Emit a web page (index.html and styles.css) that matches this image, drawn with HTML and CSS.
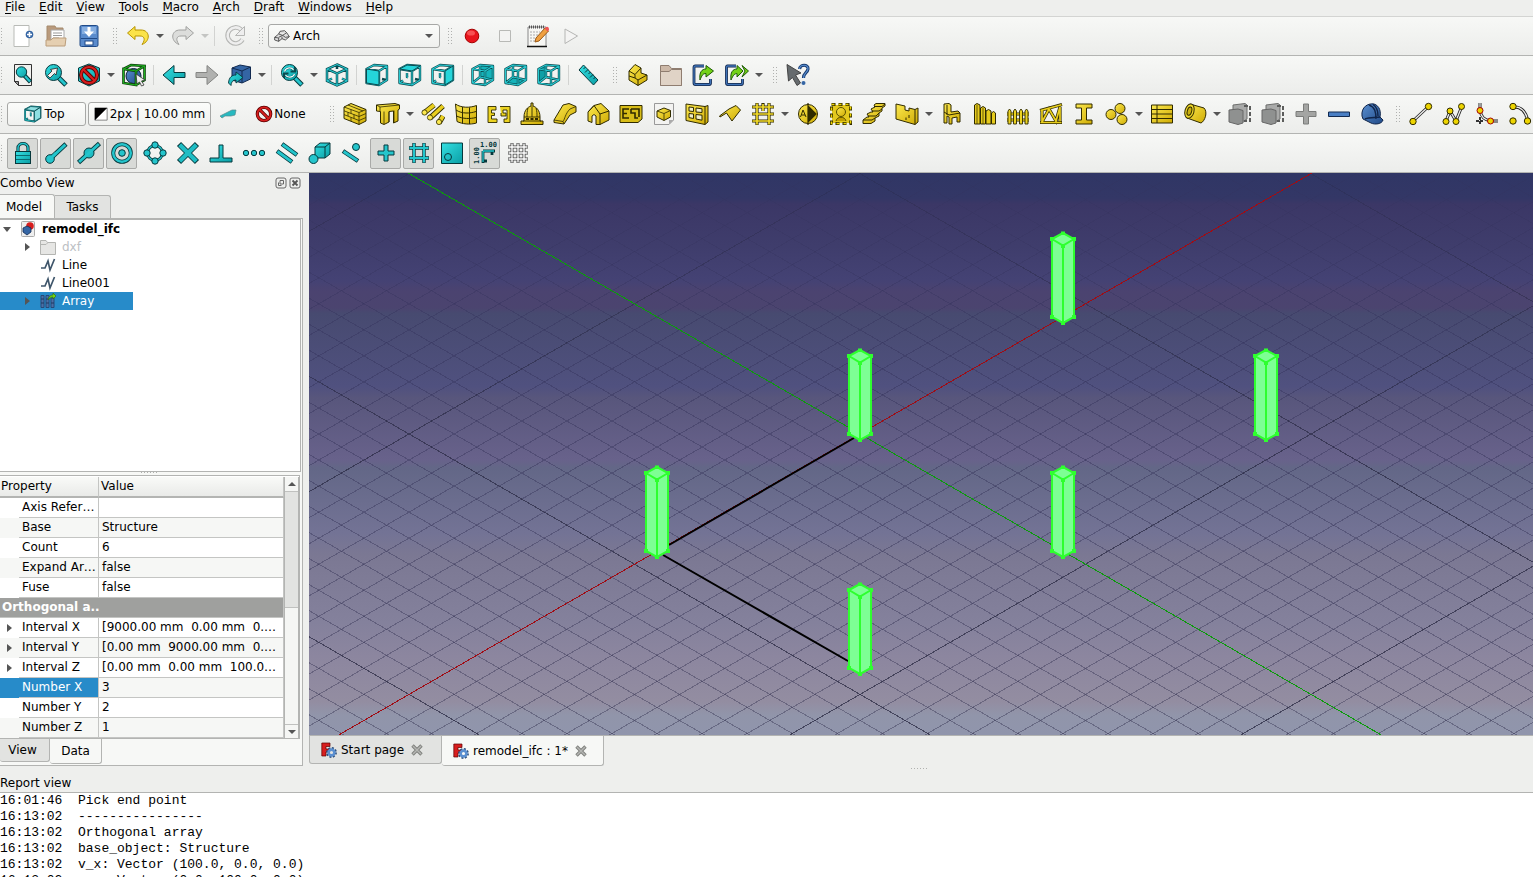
FILE: index.html
```html
<!DOCTYPE html>
<html lang="en">
<head>
<meta charset="utf-8">
<title>remodel_ifc</title>
<link rel="stylesheet" href="styles.css">
</head>
<body>
<svg class="defs" aria-hidden="true">
<defs>
<linearGradient id="gt" x1="0" y1="0" x2="1" y2="1"><stop offset="0" stop-color="#34e0e2"/><stop offset="1" stop-color="#0a9ea5"/></linearGradient>
<linearGradient id="gy" x1="0" y1="0" x2="1" y2="1"><stop offset="0" stop-color="#fce94f"/><stop offset="1" stop-color="#cfab04"/></linearGradient>
<linearGradient id="gb" x1="0" y1="0" x2="1" y2="1"><stop offset="0" stop-color="#5a8fd0"/><stop offset="1" stop-color="#204a87"/></linearGradient>
<g id="frame"><path d="M1.500 6L14 8V22L1.500 20ZM1.500 6L9 2L22 3L14 8M22 3V17L14 22M9 2V14L1.500 20M9 14L22 17" fill="none" stroke="#0a4a4f" stroke-width="2.400" stroke-linejoin="round"/><path d="M1.500 6L14 8V22L1.500 20ZM1.500 6L9 2L22 3L14 8M22 3V17L14 22M9 2V14L1.500 20M9 14L22 17" fill="none" stroke="#27c9d0" stroke-width="1.100" stroke-linejoin="round"/></g>
<g id="shell"><path d="M1.500 6L14 8V22L1.500 20ZM1.500 6L9 2L22 3L14 8M22 3V17L14 22M9 10V14L10 14.500M5 17.500L2 20M17 16L21 17" fill="none" stroke="#0a4a4f" stroke-width="2.400" stroke-linejoin="round"/><path d="M1.500 6L14 8V22L1.500 20ZM1.500 6L9 2L22 3L14 8M22 3V17L14 22M9 10V14L10 14.500M5 17.500L2 20" fill="none" stroke="#27c9d0" stroke-width="1.100" stroke-linejoin="round"/></g>
<g id="lens"><path d="M14 14L22 22" stroke="#06383c" stroke-width="5"/><path d="M14 14L21.500 21.500" stroke="#24c5cc" stroke-width="3"/><circle cx="9.500" cy="9.500" r="8" fill="url(#gt)" stroke="#06383c"/></g>
<g id="no"><circle cx="12" cy="12" r="8" fill="none" stroke="#5a0000" stroke-width="4"/><path d="M6.500 6.500L17.500 17.500" stroke="#5a0000" stroke-width="4"/><circle cx="12" cy="12" r="8" fill="none" stroke="#d81e1e" stroke-width="2.200"/><path d="M6.500 6.500L17.500 17.500" stroke="#d81e1e" stroke-width="2.200"/></g>

<symbol id="new" viewBox="0 0 24 24"><path d="M3 1.500H18V22.500H3Z" fill="#fff" stroke="#b9bbb7"/><circle cx="18.500" cy="10.500" r="3.800" fill="#3465a4"/><path d="M18.500 8V13M16 10.500H21" stroke="#fff" stroke-width="1.600"/></symbol>
<symbol id="open" viewBox="0 0 24 24"><path d="M3 2H11L12 4H19V18H3Z" fill="#b99a7c" stroke="#a58a6c"/><path d="M7 6H20V18H7Z" fill="#fff" stroke="#aaa"/><path d="M9 9H18M9 11.500H18M9 14H15" stroke="#999"/><path d="M2 16H7L9 14H22L21 22H2Z" fill="#e5cfb1" stroke="#bb9d7a"/></symbol>
<symbol id="save" viewBox="0 0 24 24"><rect x="3" y="1.500" width="18" height="21" rx="1.500" fill="#5a8bcc" stroke="#204a87"/><path d="M4 14.500H20" stroke="#204a87"/><rect x="8" y="17" width="8" height="4" fill="#fff" stroke="#204a87"/><path d="M5 3H19V10H5Z" fill="#86aee0"/><path d="M10.500 3H13.500V7.500H17L12 13L7 7.500H10.500Z" fill="#fff"/></symbol>
<symbol id="undo" viewBox="0 0 24 24"><path d="M1.500 9L9 2.500V6H15C24 6 25 17 16 20.500C20 15 18 12 14 12H9V15.500Z" fill="#fbe34a" stroke="#b79400" stroke-linejoin="round"/></symbol>
<symbol id="redo" viewBox="0 0 24 24"><path d="M22.500 9L15 2.500V6H9C0 6 -1 17 8 20.500C4 15 6 12 10 12H15V15.500Z" fill="#dcdddb" stroke="#a0a19f" stroke-linejoin="round"/></symbol>
<symbol id="refresh" viewBox="0 0 24 24"><path d="M18 5.500A8 8 0 1 0 19.500 15.500" fill="none" stroke="#b5b6b4" stroke-width="4.600"/><path d="M18 5.500A8 8 0 1 0 19.500 15.500" fill="none" stroke="#eee" stroke-width="2.600"/><path d="M21.500 2.500V11.500H12.500Z" fill="#eee" stroke="#b5b6b4"/></symbol>
<symbol id="arch" viewBox="0 0 24 24"><path d="M1 14L7 9L13 11L19 7L23 13L17 18L12 16L7 20L1 18ZM7 9L9 5L16 4L19 7M7 14L13 11L17 14L23 13M1 14L7 15V20M12 16V13" fill="#ddd" stroke="#444" stroke-width="1.300"/></symbol>
<symbol id="record" viewBox="0 0 24 24"><circle cx="12" cy="12" r="6.800" fill="#e8141c" stroke="#a40000"/><ellipse cx="11" cy="9" rx="4" ry="2.600" fill="#ff6a6a" opacity=".7"/></symbol>
<symbol id="stop" viewBox="0 0 24 24"><path d="M6.500 6.500H17.500V17.500H6.500Z" fill="#f3f3f2" stroke="#b8b9b6"/></symbol>
<symbol id="edit" viewBox="0 0 24 24"><path d="M2 3H20V22.500H2Z" fill="#f7f7f4" stroke="#888"/><path d="M1 22.500H21" stroke="#111" stroke-width="1.500"/><path d="M3 3H19" stroke="#555" stroke-width="3" stroke-dasharray="1 1"/><path d="M4 8H14M4 11H12M4 14H11M4 17H9" stroke="#aaa" stroke-dasharray="2 1"/><path d="M9 18L10 14L19 4L22.500 7L13 17Z" fill="#f0a040" stroke="#9b5a17"/><path d="M18.500 4.500L20 3Q23 2 23 6L21.500 7.500Z" fill="#e55"/></symbol>
<symbol id="play" viewBox="0 0 24 24"><path d="M6 5L18.500 12L6 19.500Z" fill="#f4f4f3" stroke="#b5b6b4"/></symbol>
<symbol id="fitall" viewBox="0 0 24 24"><path d="M3.500 1.500H20.500V22.500H7.500L3.500 18.500Z" fill="#f1f1ef" stroke="#333"/><path d="M3.500 18.500H7.500V22.500Z" fill="#999" stroke="#333"/><path d="M13 12L19.500 19" stroke="#06383c" stroke-width="4.400"/><path d="M13 12L19 18.500" stroke="#24c5cc" stroke-width="2.400"/><circle cx="10.500" cy="9" r="5.200" fill="url(#gt)" stroke="#06383c"/></symbol>
<symbol id="fitsel" viewBox="0 0 24 24"><use href="#lens"/><path d="M3.500 12.500L8 8L6.500 6.500L13.500 5L12 12L10.500 10.500L6 15Z" fill="#f2f2f0" stroke="#222" stroke-width=".8"/></symbol>
<symbol id="nodraw" viewBox="0 0 24 24"><path d="M12 1L22.500 5V18L12 23L1.500 18V5Z" fill="url(#gt)" stroke="#06383c"/><use href="#no"/></symbol>
<symbol id="bbox" viewBox="0 0 24 24"><circle cx="11.500" cy="13" r="7.500" fill="url(#gb)" stroke="#0b1e3a"/><path d="M1.500 6L14 8V22L1.500 20ZM1.500 6L9 2L22.500 3L14 8M22.500 3V17L14 22" fill="none" stroke="#0b3a0b" stroke-width="2.600"/><path d="M1.500 6L14 8V22L1.500 20ZM1.500 6L9 2L22.500 3L14 8M22.500 3V17L14 22" fill="none" stroke="#1fae1f" stroke-width="1.200"/><path d="M14 11L23 17L19.500 18L22 22L19.500 23L17.500 19L15 21Z" fill="#eee" stroke="#333" stroke-width=".8"/></symbol>
<symbol id="back" viewBox="0 0 24 24"><path d="M1 12L12 2.500V9.500H23V14.500H12V21.500Z" fill="url(#gt)" stroke="#06383c" stroke-linejoin="round"/></symbol>
<symbol id="fwd" viewBox="0 0 24 24"><path d="M23 12L12 2.500V9.500H1V14.500H12V21.500Z" fill="#b0b1af" stroke="#858684" stroke-linejoin="round"/></symbol>
<symbol id="link" viewBox="0 0 24 24"><path d="M4 5L12 2L22.500 4V16L14 20L4 17Z" fill="#3465a4" stroke="#122a50"/><path d="M4 5L14 8L22.500 4M14 8V20" fill="none" stroke="#122a50"/><path d="M0.500 20C1 14 4 12 8 12V9L15 14.500L8 20V17C5 17 3 19 3 22.500Z" fill="url(#gt)" stroke="#06383c" stroke-width=".9"/></symbol>
<symbol id="sync" viewBox="0 0 24 24"><use href="#lens"/><path d="M4.500 8.500C6 4 12 4 13.500 7M15 4V8.500H10.500M14.500 11C13 15 7 15 5.500 12M4 15V10.500H8.500" fill="none" stroke="#0a4a4f" stroke-width="2"/><path d="M4.500 8.500C6 4 12 4 13.500 7M14.500 11C13 15 7 15 5.500 12" fill="none" stroke="#e8ffff" stroke-width="1.200"/></symbol>
<symbol id="iso" viewBox="0 0 24 24"><path d="M12 1.500L22 6V18L12 22.500L2 18V6ZM2 6L12 10.500L22 6M12 10.500V22.500M12 2V6M2 18L7 15.500M22 18L17 15.500" fill="none" stroke="#0a4a4f" stroke-width="2.500"/><path d="M12 1.500L22 6V18L12 22.500L2 18V6ZM2 6L12 10.500L22 6M12 10.500V22.500M2 18L7 15.500M22 18L17 15.500" fill="none" stroke="#27c9d0" stroke-width="1.100"/></symbol>
<symbol id="vfront" viewBox="0 0 24 24"><use href="#shell"/><path d="M1.500 6L14 8V22L1.500 20Z" fill="#25d5da" stroke="#0a4a4f"/></symbol>
<symbol id="vtop" viewBox="0 0 24 24"><use href="#shell"/><path d="M1.500 6L9 2L22 3L14 8Z" fill="#25d5da" stroke="#0a4a4f"/></symbol>
<symbol id="vright" viewBox="0 0 24 24"><use href="#shell"/><path d="M14 8L22 3V17L14 22Z" fill="#25d5da" stroke="#0a4a4f"/></symbol>
<symbol id="vrear" viewBox="0 0 24 24"><path d="M9 2L22 3V17L9 14Z" fill="#16b3ba"/><use href="#frame"/></symbol>
<symbol id="vbottom" viewBox="0 0 24 24"><path d="M9 14L22 17L14 22L1.500 20Z" fill="#16b3ba"/><use href="#frame"/></symbol>
<symbol id="vleft" viewBox="0 0 24 24"><path d="M1.500 6L9 2V14L1.500 20Z" fill="#0f9fa6"/><use href="#frame"/></symbol>
<symbol id="ruler" viewBox="0 0 24 24"><path d="M6.500 2L21 17L16.500 22L2 7Z" fill="url(#gt)" stroke="#06383c"/><path d="M8.500 4L6.500 6M11 6.500L8 9.500M13.500 9L11.500 11M16 11.500L13 14.500M18.500 14L16.500 16" stroke="#06383c"/></symbol>
<symbol id="part" viewBox="0 0 24 24"><path d="M3 8L9 1.500L15 5V10L21 12V17L12 22.500L3 17Z" fill="url(#gy)" stroke="#302b00"/><path d="M3 8L9 11.500L15 5M9 11.500V15L12 17L21 12M3 13L9 15M12 17V22.500" fill="none" stroke="#302b00"/></symbol>
<symbol id="folder" viewBox="0 0 24 24"><path d="M1.500 2.500H10L12.500 5.500H22.500V22.500H1.500Z" fill="#cdb9a8" stroke="#8f7d70"/><path d="M1.500 8.500H10L12.500 6.500H22.500V22.500H1.500Z" fill="#e0d3c6" stroke="#8f7d70"/></symbol>
<symbol id="share" viewBox="0 0 24 24"><path d="M12 3H3.500Q2 3 2 4.500V20Q2 21.500 3.500 21.500H17Q18.500 21.500 18.500 20V16" fill="none" stroke="#10254a" stroke-width="2.800"/><path d="M12 3H3.500Q2 3 2 4.500V20Q2 21.500 3.500 21.500H17Q18.500 21.500 18.500 20V16" fill="none" stroke="#3f73b8" stroke-width="1.300"/><path d="M8 17C7 9 10 6 14 6V2.500L21.500 8L14 14V10.500C11 10.500 10 12 8 17Z" fill="#73d216" stroke="#1c5a04"/></symbol>
<symbol id="share2" viewBox="0 0 24 24"><path d="M11 3H2.500Q1.500 3 1.500 4.500V20Q1.500 21.500 3 21.500H16Q17.500 21.500 17.500 20V16" fill="none" stroke="#10254a" stroke-width="2.800"/><path d="M11 3H2.500Q1.500 3 1.500 4.500V20Q1.500 21.500 3 21.500H16Q17.500 21.500 17.500 20V16" fill="none" stroke="#3f73b8" stroke-width="1.300"/><path d="M6 17C5 9 8 6 12 6V2.500L18 8L12 14V10.500C10 10.500 8 12 6 17ZM17 2.500L23.500 8L17 14L20 8Z" fill="#73d216" stroke="#1c5a04"/></symbol>
<symbol id="whats" viewBox="0 0 24 24"><path d="M1 1.500L15 10L9.500 12L14.500 20L11 22.500L6.500 14.500L2.500 18Z" fill="#666b6e" stroke="#444"/><path d="M13.500 6C14 1 22.500 1 22 6C21.500 10 17.500 9.500 17.500 15" fill="none" stroke="#173a70" stroke-width="3.200"/><path d="M13.500 6C14 1 22.500 1 22 6C21.500 10 17.500 9.500 17.500 15" fill="none" stroke="#5a8fd0" stroke-width="1.200"/><circle cx="17.500" cy="20" r="2" fill="#3465a4"/></symbol>
<symbol id="topcube" viewBox="0 0 24 24"><use href="#shell"/><path d="M1.500 6L9 2L22 3L14 8ZM14 8L22 3V17L14 22Z" fill="#8fe0e2" stroke="#0a4a4f"/></symbol>
<symbol id="swatch" viewBox="0 0 16 16"><path d="M1 1H15V15H1Z" fill="#fff" stroke="#777"/><path d="M1 1H15L1 15Z" fill="#000"/></symbol>
<symbol id="stamp" viewBox="0 0 24 24"><path d="M4 14L12 10L16 8L20 8L19 13L15 14L9 14L6 16Z" fill="#27b9c0" stroke="#58898c" stroke-width=".7"/></symbol>
<symbol id="none" viewBox="0 0 24 24"><use href="#no"/></symbol>

<symbol id="wall" viewBox="0 0 24 24"><path d="M1 5L8 1.500L23 7.500V19L16 22.500L1 16.500Z" fill="url(#gy)" stroke="#302b00"/><path d="M1 5L16 10.500L23 7.500M16 10.500V22.500M1 8.800L16 14.500L23 11.500M1 12.600L16 18.500L23 15.500M8 7.500V11.500M5 10.300V14M11 12.500V16.500M8 15.400V19M5 3L20 9" fill="none" stroke="#302b00" stroke-width=".8"/></symbol>
<symbol id="struct" viewBox="0 0 24 24"><path d="M0.500 3L19 1.500L23.500 3V7L22 8V19L17.500 21V9L13 9.500V20L8 22.500L4.500 21V9.500L0.500 9Z" fill="url(#gy)" stroke="#302b00"/><path d="M0.500 3L4 5L23.500 3M4 5V9.500M8 9.500V22M18 8.500V20M13 10V20" stroke="#302b00" fill="none" stroke-width=".8"/></symbol>
<symbol id="rebar" viewBox="0 0 24 24"><path d="M3 11L13 3M9 16L22 4M18 21L22 14" stroke="#302b00" stroke-width="5.400"/><path d="M3 11L13 3M9 16L22 4M18 21L22 14" stroke="#e9cf1e" stroke-width="3.600"/><g fill="#fce94f" stroke="#302b00" stroke-width=".8"><circle cx="3.500" cy="10.500" r="2.600"/><circle cx="9" cy="15.500" r="2.600"/><circle cx="18" cy="20" r="2.600"/></g></symbol>
<symbol id="curtain" viewBox="0 0 24 24"><path d="M1.500 2C7 6 16 6 22.500 3.500V21C16 23 8 22 3 19.500Z" fill="url(#gy)" stroke="#302b00"/><path d="M2 8C8 12 16 11.500 22 9.500M2.500 14C9 17 16 17 22 15.500M8.500 5V21.500M15.500 5.500V22" fill="none" stroke="#302b00"/></symbol>
<symbol id="plan" viewBox="0 0 24 24"><path d="M1 4.500H9V8H4.500V11H7.500V13.500H4.500V17H10V20.500H1ZM13 4.500H23V20.500H17V17H20V8H16V11H19V14H14V11" fill="#ecd321" stroke="#302b00" stroke-width=".9"/></symbol>
<symbol id="dome" viewBox="0 0 24 24"><path d="M4 15C4 8 8 5 11 4V1H13V4C16 5 20 8 20 15V19H23V22.500H1V19H4Z" fill="url(#gy)" stroke="#302b00"/><path d="M4 15H20M3 19H21M12 4V15M8 6C7 9 7 12 7 15M16 6C17 9 17 12 17 15" fill="none" stroke="#302b00" stroke-width=".9"/><path d="M6 17H9M10.500 17H13.500M15 17H18" stroke="#302b00" stroke-width="1.800"/></symbol>
<symbol id="ramp" viewBox="0 0 24 24"><path d="M1 18L10 3L16 1.500L23 4.500V10L17 13L11 22L1 20.500Z" fill="url(#gy)" stroke="#302b00"/><path d="M1 18L10 19.500C12 17 12 12 17 7L23 4.500M10 19.500L11 22" fill="none" stroke="#302b00" stroke-width=".8"/></symbol>
<symbol id="house" viewBox="0 0 24 24"><path d="M2 10L8 3.500L15 1.500L23 9V18L14 22.500H10V14Q8 11 6 14V20.500L2 19Z" fill="url(#gy)" stroke="#302b00"/><path d="M2 10L8 3.500L14 12V22.500M14 12L23 9" fill="none" stroke="#302b00"/></symbol>
<symbol id="floor" viewBox="0 0 24 24"><path d="M1 3.500H23V17L19 20.500H1Z" fill="#d8bd18" stroke="#302b00"/><path d="M10 7H4V16H10M4 11.500H8M12 7H20V15M12 7V11H16V16H19" fill="none" stroke="#302b00" stroke-width="1.600"/></symbol>
<symbol id="page" viewBox="0 0 24 24"><path d="M2.500 1.500H21.500V18L17 22.500H2.500Z" fill="#f3f3f1" stroke="#999"/><path d="M17 22.500V18H21.500Z" fill="#aaa"/><path d="M5 9L12 6L18.500 8.500V15L12 18.500L5 15Z" fill="url(#gy)" stroke="#302b00"/><path d="M5 9L12 11.500L18.500 8.500M12 11.500V18" fill="none" stroke="#302b00" stroke-width=".8"/></symbol>
<symbol id="window" viewBox="0 0 24 24"><path d="M1 2L20 4.500L23 3.500V20L20 22.500L1 18.500Z" fill="url(#gy)" stroke="#302b00"/><path d="M4 5L8.500 5.500V9.500L4 9ZM11 6L17 6.800V10.500L11 10ZM4 11.500L8.500 12V16.500L4 15.600ZM11 12.500L17 13.200V18.200L11 17ZM20 4.500V22.500" fill="#f0eec8" stroke="#302b00"/></symbol>
<symbol id="roof" viewBox="0 0 24 24"><path d="M1.500 14L11 7L18 3.500L22.500 8L14 19L8.500 11L2 15Z" fill="url(#gy)" stroke="#302b00"/></symbol>
<symbol id="axis" viewBox="0 0 24 24"><path d="M6 1V23M18 1V23M12 1V9M1 5H23M1 12H23M1 19H23" stroke="#302b00" stroke-width="3.200"/><path d="M6 1.500V22.500M18 1.500V22.500M12 2V9M1.500 5H22.500M1.500 12H22.500M1.500 19H22.500" stroke="#f3dc2c" stroke-width="1.700"/></symbol>
<symbol id="section" viewBox="0 0 24 24"><circle cx="12" cy="12" r="9.500" fill="url(#gy)" stroke="#302b00"/><path d="M12 1V23M12 4L20 12L12 20Z" fill="#302b00" stroke="#302b00" stroke-width="1.200"/><path d="M4.500 15L7 8L10 15M5.500 13H9" fill="none" stroke="#302b00"/></symbol>
<symbol id="space" viewBox="0 0 24 24"><rect x="3" y="3" width="18" height="18" fill="#e3c91e"/><rect x="2.500" y="2.500" width="19" height="19" fill="none" stroke="#302b00" stroke-width="3" stroke-dasharray="4 3"/><rect x="2.500" y="2.500" width="19" height="19" fill="none" stroke="#edd400" stroke-width="1.500" stroke-dasharray="3 4"/><circle cx="12" cy="10" r="4.500" fill="url(#gy)" stroke="#5a5000"/><path d="M7 19C8 14 16 14 17 19" fill="#c4a000" stroke="#5a5000"/></symbol>
<symbol id="stairs" viewBox="0 0 24 24"><path d="M1 18L5 15H7L5 12L9 10H11L9 7L13 5L12 3L14 1.500H23V4L20 6V9L17 11V14L13 16V19L9 21.500H1Z" fill="url(#gy)" stroke="#302b00"/><path d="M1 18H10L13 16M6 14H14L17 11M10 9H17L20 7M12 4.500H20L23 2" stroke="#302b00" fill="none"/></symbol>
<symbol id="panel" viewBox="0 0 24 24"><path d="M1 2L10 4V8L14 9V6L20 7.500L23 6V20L20 22.500L1 17Z" fill="url(#gy)" stroke="#302b00"/><path d="M20 7.500V22.500M11 15.500V18M14 16V13" stroke="#302b00"/></symbol>
<symbol id="chair" viewBox="0 0 24 24"><path d="M4 2L9 1.500L11 3V10L18 9L20 11V20H17V15L12 16V22H9V15L7 14V21H4Z" fill="url(#gy)" stroke="#302b00"/><path d="M7 3V13M4 10L9 13L20 11" fill="none" stroke="#302b00"/></symbol>
<symbol id="piles" viewBox="0 0 24 24"><path d="M1.500 3L4 1.500L7 3V22H1.500ZM7.500 6L10 4.500L12.500 6V22H7.500ZM13 9L15.500 7.500L18 9V22H13ZM18.500 11L20.500 9.500L22.500 11V22H18.500Z" fill="#e6cb1d" stroke="#302b00"/><path d="M4 3V22M10 6V22" stroke="#302b00" stroke-width=".7"/></symbol>
<symbol id="fence" viewBox="0 0 24 24"><path d="M1 12H23M1 18H23" stroke="#302b00" stroke-width="3"/><path d="M1 12H23M1 18H23" stroke="#ecd321" stroke-width="1.400"/><path d="M2 9L3.500 7L5 9V22H2ZM7.500 9L9 7L10.500 9V22H7.500ZM13.500 9L15 7L16.500 9V22H13.500ZM19 9L20.500 7L22 9V22H19Z" fill="#ecd321" stroke="#302b00" stroke-width=".9"/></symbol>
<symbol id="truss" viewBox="0 0 24 24"><path d="M1 8.500L23 2.500M1 20.500H23M3 8V20L10 7L17 19L21 5V19" fill="none" stroke="#302b00" stroke-width="3.200"/><path d="M1.500 8.500L22.500 2.800M1.500 20.500H22.500M3 8V20L10 7L17 19L21 5V19" fill="none" stroke="#e9cf1e" stroke-width="1.700"/></symbol>
<symbol id="ibeam" viewBox="0 0 24 24"><path d="M4 2H20V6H14.500V18H20V22H4V18H9.500V6H4Z" fill="url(#gy)" stroke="#302b00"/></symbol>
<symbol id="balls" viewBox="0 0 24 24"><g fill="url(#gy)" stroke="#302b00"><circle cx="15" cy="6.500" r="5"/><circle cx="6" cy="12.500" r="5"/><circle cx="17" cy="17.500" r="5"/></g></symbol>
<symbol id="sched" viewBox="0 0 24 24"><path d="M1.500 3H22.500V21H1.500Z" fill="url(#gy)" stroke="#302b00"/><path d="M1.500 7.500H22.500M1.500 12H22.500M1.500 16.500H22.500M7 3V21" stroke="#302b00"/></symbol>
<symbol id="pipe" viewBox="0 0 24 24"><path d="M7 2L21 6C25 10 22 19 18 21L4 16Z" fill="url(#gy)" stroke="#302b00"/><ellipse cx="6.500" cy="9" rx="4.500" ry="7.300" fill="#f1da2a" stroke="#302b00" transform="rotate(15 6 9)"/><ellipse cx="6.500" cy="9" rx="2.200" ry="4.300" fill="#cbb00f" stroke="#302b00" transform="rotate(15 6 9)"/></symbol>
<symbol id="gbox" viewBox="0 0 24 24"><path d="M5 3L17 1.500L19 3V17L14 20H5Z" fill="#a9aaa9" stroke="#6d6e6d"/><path d="M1 8L10 7L15 8.500V21L10 22.500L1 20Z" fill="#8f9190" stroke="#666"/><path d="M16 4H22V19H16" fill="none" stroke="#5c5d5c" stroke-width="2" stroke-dasharray="4 2"/></symbol>
<symbol id="plus" viewBox="0 0 24 24"><path d="M9.500 2H14.500V9.500H22V14.500H14.500V22H9.500V14.500H2V9.500H9.500Z" fill="#a4a5a3" stroke="#7b7c7a"/></symbol>
<symbol id="minus" viewBox="0 0 24 24"><path d="M1.500 10H22.500V14.500H1.500Z" fill="#4a7fc4" stroke="#122a50"/></symbol>
<symbol id="hat" viewBox="0 0 24 24"><path d="M2 14C1 5 8 1 14 2C20 4 21 10 20 15L23 18C22 22 15 23 11 21L3 17Z" fill="url(#gb)" stroke="#10254a"/><path d="M9 3C15 5 16 10 16 17M5 17C10 15 16 16 20 15M13 2.500C17 5 18 9 18 14" fill="none" stroke="#10254a" stroke-width="1.400"/></symbol>
<symbol id="dline" viewBox="0 0 24 24"><path d="M4 19L20 4" stroke="#222" stroke-width="3"/><path d="M4 19L20 4" stroke="#eee" stroke-width="1.400"/><g fill="#edd400" stroke="#302b00"><circle cx="4" cy="19.500" r="3.200"/><circle cx="19.500" cy="4.500" r="3.200"/></g></symbol>
<symbol id="dwire" viewBox="0 0 24 24"><path d="M4 19L8 9L14 19L20 4" fill="none" stroke="#222" stroke-width="3"/><path d="M4 19L8 9L14 19L20 4" fill="none" stroke="#eee" stroke-width="1.300"/><g fill="#edd400" stroke="#302b00"><circle cx="4" cy="19.500" r="3"/><circle cx="8" cy="9" r="3"/><circle cx="14" cy="19.500" r="3"/><circle cx="19.500" cy="4.500" r="3"/></g></symbol>
<symbol id="dfillet" viewBox="0 0 24 24"><path d="M5 1V8C6 15 9 18 16 19H23" fill="none" stroke="#222" stroke-width="3"/><path d="M5 1V8C6 15 9 18 16 19H23" fill="none" stroke="#eee" stroke-width="1.200"/><path d="M5 15V23M1 19H9" stroke="#333" stroke-width="2" stroke-dasharray="3 1"/><g fill="#edd400" stroke="#a40000"><circle cx="5" cy="8.500" r="3"/><circle cx="15.500" cy="19" r="3"/></g></symbol>
<symbol id="darc" viewBox="0 0 24 24"><path d="M5 5C13 4 18 10 19.500 18" fill="none" stroke="#222" stroke-width="3"/><path d="M5 5C13 4 18 10 19.500 18" fill="none" stroke="#eee" stroke-width="1.300"/><g fill="#edd400" stroke="#302b00"><circle cx="5" cy="4.500" r="3.200"/><circle cx="5" cy="19" r="3.200"/><circle cx="19.500" cy="19" r="3.200"/></g></symbol>

<symbol id="slock" viewBox="0 0 24 24"><path d="M7 11V7C7 1 17 1 17 7V11" fill="none" stroke="#06383c" stroke-width="3.200"/><path d="M7 11V7C7 1 17 1 17 7V11" fill="none" stroke="#24c5cc" stroke-width="1.500"/><rect x="4.500" y="10.500" width="15" height="12" fill="url(#gt)" stroke="#06383c"/><path d="M5 14.500H19M5 18.500H19" stroke="#0a6a70"/></symbol>
<symbol id="send" viewBox="0 0 24 24"><path d="M7 17L22 3" stroke="#06383c" stroke-width="4.600"/><path d="M7 17L21.400 3.600" stroke="#24c5cc" stroke-width="2.900"/><circle cx="6" cy="18" r="4.300" fill="#24c5cc" stroke="#06383c"/><path d="M7 17L12 12" stroke="#24c5cc" stroke-width="2.900"/></symbol>
<symbol id="smid" viewBox="0 0 24 24"><path d="M1.500 21.500L22.500 2.500" stroke="#06383c" stroke-width="4.600"/><circle cx="12" cy="12" r="5" fill="#20bcc3" stroke="#06383c"/><path d="M2.100 21L21.900 3" stroke="#24c5cc" stroke-width="2.900"/></symbol>
<symbol id="scen" viewBox="0 0 24 24"><circle cx="12" cy="12" r="8.800" fill="none" stroke="#06383c" stroke-width="4"/><circle cx="12" cy="12" r="8.800" fill="none" stroke="#24c5cc" stroke-width="2.500"/><circle cx="12" cy="12" r="3.300" fill="#24c5cc" stroke="#06383c"/></symbol>
<symbol id="sang" viewBox="0 0 24 24"><circle cx="12" cy="12" r="7.500" fill="none" stroke="#06383c" stroke-width="3"/><circle cx="12" cy="12" r="7.500" fill="none" stroke="#24c5cc" stroke-width="1.300"/><g fill="#24c5cc" stroke="#06383c"><circle cx="12" cy="4" r="3.200"/><circle cx="12" cy="20" r="3.200"/><circle cx="4" cy="12" r="3.200"/><circle cx="20" cy="12" r="3.200"/></g></symbol>
<symbol id="sint" viewBox="0 0 24 24"><path d="M3 3L21 21M21 3L3 21" stroke="#06383c" stroke-width="5.800"/><path d="M3.700 3.700L20.300 20.300M20.300 3.700L3.700 20.300" stroke="#1fbdc4" stroke-width="4.200"/></symbol>
<symbol id="sperp" viewBox="0 0 24 24"><path d="M10 4H14V17H23V21H1V17H10Z" fill="url(#gt)" stroke="#06383c"/></symbol>
<symbol id="sext" viewBox="0 0 24 24"><g fill="#24c5cc" stroke="#06383c"><circle cx="4" cy="12" r="2.700"/><circle cx="12" cy="12" r="2.700"/><circle cx="20" cy="12" r="2.700"/></g></symbol>
<symbol id="spar" viewBox="0 0 24 24"><path d="M7 3L22 14M2 10L17 21" stroke="#06383c" stroke-width="4.400"/><path d="M7.500 3.500L21.500 13.600M2.500 10.500L16.500 20.600" stroke="#24c5cc" stroke-width="2.800"/></symbol>
<symbol id="sspec" viewBox="0 0 24 24"><path d="M7 6L12 2H22V13L17 17H7Z" fill="url(#gt)" stroke="#06383c"/><path d="M7 6H17L22 2M17 6V17" fill="none" stroke="#06383c"/><circle cx="5.500" cy="18" r="4.500" fill="#24c5cc" stroke="#06383c"/></symbol>
<symbol id="snear" viewBox="0 0 24 24"><path d="M2 10L17 20" stroke="#06383c" stroke-width="4.400"/><path d="M2.600 10.500L16.400 19.600" stroke="#24c5cc" stroke-width="2.800"/><circle cx="15" cy="6" r="3.500" fill="#24c5cc" stroke="#06383c"/></symbol>
<symbol id="sortho" viewBox="0 0 24 24"><path d="M10 4H14V10H20V14H14V20H10V14H4V10H10Z" fill="#24c5cc" stroke="#06383c"/></symbol>
<symbol id="sgrid" viewBox="0 0 24 24"><path d="M7 2V22M17 2V22M2 7H22M2 17H22" stroke="#06383c" stroke-width="3.400"/><path d="M7 2.500V21.500M17 2.500V21.500M2.500 7H21.500M2.500 17H21.500" stroke="#24c5cc" stroke-width="2"/></symbol>
<symbol id="swp" viewBox="0 0 24 24"><path d="M1.500 2H22.500V22.500H1.500Z" fill="url(#gt)" stroke="#06383c"/><circle cx="8" cy="16" r="3.500" fill="none" stroke="#06383c"/></symbol>
<symbol id="sdim" viewBox="0 0 24 24"><path d="M10 10H22M10 10V22M19 10V14M10 20H14" fill="none" stroke="#06383c" stroke-width="2.800"/><path d="M10 10H21M10 10V21" fill="none" stroke="#24c5cc" stroke-width="1.300"/><text x="7" y="6" class="dimtext">1.00</text><text x="-23" y="6" transform="rotate(-90)" class="dimtext">1.00</text></symbol>
<symbol id="sgrid2" viewBox="0 0 24 24"><path d="M6 2V22M12 2V22M18 2V22M2 6H22M2 12H22M2 18H22" stroke="#444" stroke-width="3"/><path d="M6 2.500V21.500M12 2.500V21.500M18 2.500V21.500M2.500 6H21.500M2.500 12H21.500M2.500 18H21.500" stroke="#fff" stroke-width="1.400"/></symbol>

<symbol id="doc" viewBox="0 0 16 16"><rect x="1.500" y=".5" width="13" height="15" rx="1" fill="#eee" stroke="#aaa"/><circle cx="10" cy="5" r="3.800" fill="#d81e1e"/><path d="M3 7L7 5L11 7V11L7 14L3 11Z" fill="#3465a4" stroke="#122a50" stroke-width=".8"/></symbol>
<symbol id="group" viewBox="0 0 16 16"><path d="M.5 1.500H6L7.500 3.500H15.500V15.500H.5Z" fill="#e6e6e4" stroke="#b4b5b2"/><path d="M.5 5.500H6L8 3.500" fill="none" stroke="#b4b5b2"/></symbol>
<symbol id="poly" viewBox="0 0 16 16"><path d="M1 11H5L8 4L10 13L14.500 2" fill="none" stroke="#3f566b" stroke-width="1.700"/></symbol>
<symbol id="array" viewBox="0 0 16 16"><path d="M1 2.500H4V14.500H1ZM6 2.500H9V14.500H6ZM11 5H14V14.500H11Z" fill="#4c6fa5" stroke="#274a78"/><path d="M1 6H4M1 10H4M6 6H9M6 10H9M11 10H14" stroke="#203a62"/><path d="M8 7C9 3 11 2 13 2V0L16 3L13 6V4C11 4 10 5 8 7Z" fill="#73d216" stroke="#2f6b06" stroke-width=".6"/></symbol>
<symbol id="fc" viewBox="0 0 16 16"><path d="M.8 1H9V4.500H5V7H8V10H5V14H.8Z" fill="#d81e1e" stroke="#5a0000" stroke-width=".7"/><circle cx="10.500" cy="10.500" r="4.500" fill="none" stroke="#274a78" stroke-width="1.800" stroke-dasharray="2 1.500"/><circle cx="10.500" cy="10.500" r="2.900" fill="none" stroke="#5a8fd0" stroke-width="2.600"/></symbol>
<symbol id="x" viewBox="0 0 12 12"><path d="M1.500 1.500L10.500 10.500M10.500 1.500L1.500 10.500" stroke="#7f817d" stroke-width="3.400"/><path d="M2 2L10 10M10 2L2 10" stroke="#b5b6b3" stroke-width="1.500"/></symbol>
<symbol id="float" viewBox="0 0 12 12"><rect x="1" y="1" width="10" height="10" rx="2" fill="none" stroke="#666"/><path d="M5 3.500H8.500V7H5ZM3.500 5.500V8.500H6.500" fill="none" stroke="#666"/></symbol>
<symbol id="close" viewBox="0 0 12 12"><rect x="1" y="1" width="10" height="10" rx="2" fill="none" stroke="#666"/><path d="M3.500 3.500L8.500 8.500M8.500 3.500L3.500 8.500" stroke="#555" stroke-width="1.800"/></symbol>
<symbol id="column" viewBox="-16 -90 32 102" overflow="visible"><path d="M-11 -78L0 -84L11 -78V0L0 6L-11 0Z" fill="#7dff94"/><path d="M-11 -78L0 -84L11 -78V0L0 6L-11 0ZM-11 -78L0 -71.500L11 -78M0 -71.500V6" fill="none" stroke="#2eff2e" stroke-width="2"/><path d="M-2 -85.500H2V-82H-2ZM-13 -80H-9V-76H-13ZM9 -80H13V-76H9ZM-2 -73H2V-69H-2ZM-13 -2H-9V2H-13ZM9 -2H13V2H9ZM-2 4H2V8H-2Z" fill="#2eff2e"/></symbol>
</defs>
</svg>

<nav class="menubar" aria-label="Main menu">
<button><u>F</u>ile</button><button><u>E</u>dit</button><button><u>V</u>iew</button><button><u>T</u>ools</button><button><u>M</u>acro</button><button><u>A</u>rch</button><button><u>D</u>raft</button><button><u>W</u>indows</button><button><u>H</u>elp</button>
</nav>

<div class="toolbar" role="toolbar" aria-label="File and macro">
<i class="grip first"></i>
<button class="tool" aria-label="New"><svg><use href="#new"/></svg></button>
<button class="tool" aria-label="Open"><svg><use href="#open"/></svg></button>
<button class="tool" aria-label="Save"><svg><use href="#save"/></svg></button>
<i class="grip"></i>
<button class="tool" aria-label="Undo"><svg><use href="#undo"/></svg></button><button class="drop" aria-label="Undo list"></button>
<button class="tool" aria-label="Redo"><svg><use href="#redo"/></svg></button><button class="drop off" aria-label="Redo list"></button>
<i class="sep"></i>
<button class="tool" aria-label="Refresh"><svg><use href="#refresh"/></svg></button>
<i class="grip"></i>
<div class="workbench"><svg><use href="#arch"/></svg><select aria-label="Workbench"><option>Arch</option></select></div>
<i class="grip"></i>
<button class="tool" aria-label="Record macro"><svg><use href="#record"/></svg></button>
<button class="tool" aria-label="Stop macro"><svg><use href="#stop"/></svg></button>
<button class="tool" aria-label="Macros"><svg><use href="#edit"/></svg></button>
<button class="tool" aria-label="Execute macro"><svg><use href="#play"/></svg></button>
</div>

<div class="toolbar" role="toolbar" aria-label="View">
<i class="grip first"></i>
<button class="tool" aria-label="Fit all"><svg><use href="#fitall"/></svg></button>
<button class="tool" aria-label="Fit selection"><svg><use href="#fitsel"/></svg></button>
<button class="tool" aria-label="Draw style"><svg><use href="#nodraw"/></svg></button><button class="drop" aria-label="Draw styles"></button>
<button class="tool" aria-label="Bounding box"><svg><use href="#bbox"/></svg></button>
<i class="sep"></i>
<button class="tool" aria-label="Back"><svg><use href="#back"/></svg></button>
<button class="tool" aria-label="Forward"><svg><use href="#fwd"/></svg></button>
<button class="tool" aria-label="Go to linked object"><svg><use href="#link"/></svg></button><button class="drop" aria-label="Link actions"></button>
<i class="sep"></i>
<button class="tool" aria-label="Sync view"><svg><use href="#sync"/></svg></button><button class="drop" aria-label="Sync options"></button>
<button class="tool" aria-label="Isometric"><svg><use href="#iso"/></svg></button>
<i class="sep"></i>
<button class="tool" aria-label="Front"><svg><use href="#vfront"/></svg></button>
<button class="tool" aria-label="Top"><svg><use href="#vtop"/></svg></button>
<button class="tool" aria-label="Right"><svg><use href="#vright"/></svg></button>
<i class="sep"></i>
<button class="tool" aria-label="Rear"><svg><use href="#vrear"/></svg></button>
<button class="tool" aria-label="Bottom"><svg><use href="#vbottom"/></svg></button>
<button class="tool" aria-label="Left"><svg><use href="#vleft"/></svg></button>
<i class="sep"></i>
<button class="tool" aria-label="Measure"><svg><use href="#ruler"/></svg></button>
<i class="grip"></i>
<button class="tool" aria-label="Create part"><svg><use href="#part"/></svg></button>
<button class="tool" aria-label="Create group"><svg><use href="#folder"/></svg></button>
<button class="tool" aria-label="Make link"><svg><use href="#share"/></svg></button>
<button class="tool" aria-label="Make sub-link"><svg><use href="#share2"/></svg></button><button class="drop" aria-label="Link options"></button>
<i class="grip"></i>
<button class="tool" aria-label="What's this"><svg><use href="#whats"/></svg></button>
</div>

<div class="toolbar" role="toolbar" aria-label="Arch tools">
<i class="grip first"></i>
<button class="textbtn plane"><svg><use href="#topcube"/></svg>Top</button>
<button class="textbtn style"><svg class="small"><use href="#swatch"/></svg>2px | 10.00 mm</button>
<button class="tool" aria-label="Construction mode"><svg><use href="#stamp"/></svg></button>
<button class="autogroup"><svg><use href="#none"/></svg>None</button>
<i class="grip"></i>
<button class="tool" aria-label="Wall"><svg><use href="#wall"/></svg></button>
<button class="tool" aria-label="Structure"><svg><use href="#struct"/></svg></button><button class="drop" aria-label="Structure tools"></button>
<button class="tool" aria-label="Rebar"><svg><use href="#rebar"/></svg></button>
<button class="tool" aria-label="Curtain wall"><svg><use href="#curtain"/></svg></button>
<button class="tool" aria-label="Building part"><svg><use href="#plan"/></svg></button>
<button class="tool" aria-label="Project"><svg><use href="#dome"/></svg></button>
<button class="tool" aria-label="Site"><svg><use href="#ramp"/></svg></button>
<button class="tool" aria-label="Building"><svg><use href="#house"/></svg></button>
<button class="tool" aria-label="Floor"><svg><use href="#floor"/></svg></button>
<button class="tool" aria-label="Reference"><svg><use href="#page"/></svg></button>
<button class="tool" aria-label="Window"><svg><use href="#window"/></svg></button>
<button class="tool" aria-label="Roof"><svg><use href="#roof"/></svg></button>
<button class="tool" aria-label="Axis"><svg><use href="#axis"/></svg></button><button class="drop" aria-label="Axis tools"></button>
<button class="tool" aria-label="Section plane"><svg><use href="#section"/></svg></button>
<button class="tool" aria-label="Space"><svg><use href="#space"/></svg></button>
<button class="tool" aria-label="Stairs"><svg><use href="#stairs"/></svg></button>
<button class="tool" aria-label="Panel"><svg><use href="#panel"/></svg></button><button class="drop" aria-label="Panel tools"></button>
<button class="tool" aria-label="Equipment"><svg><use href="#chair"/></svg></button>
<button class="tool" aria-label="Frame"><svg><use href="#piles"/></svg></button>
<button class="tool" aria-label="Fence"><svg><use href="#fence"/></svg></button>
<button class="tool" aria-label="Truss"><svg><use href="#truss"/></svg></button>
<button class="tool" aria-label="Profile"><svg><use href="#ibeam"/></svg></button>
<button class="tool" aria-label="Material"><svg><use href="#balls"/></svg></button><button class="drop" aria-label="Material tools"></button>
<button class="tool" aria-label="Schedule"><svg><use href="#sched"/></svg></button>
<button class="tool" aria-label="Pipe"><svg><use href="#pipe"/></svg></button><button class="drop" aria-label="Pipe tools"></button>
<button class="tool" aria-label="Cut with plane"><svg><use href="#gbox"/></svg></button>
<button class="tool" aria-label="Cut with line"><svg><use href="#gbox"/></svg></button>
<button class="tool" aria-label="Add"><svg><use href="#plus"/></svg></button>
<button class="tool" aria-label="Remove"><svg><use href="#minus"/></svg></button>
<button class="tool" aria-label="Survey"><svg><use href="#hat"/></svg></button>
<i class="grip"></i>
<button class="tool" aria-label="Draft line"><svg><use href="#dline"/></svg></button>
<button class="tool" aria-label="Draft wire"><svg><use href="#dwire"/></svg></button>
<button class="tool" aria-label="Draft fillet"><svg><use href="#dfillet"/></svg></button>
<button class="tool" aria-label="Draft arc"><svg><use href="#darc"/></svg></button>
</div>

<div class="toolbar" role="toolbar" aria-label="Snap">
<i class="grip first"></i>
<button class="tool on" aria-label="Snap lock"><svg><use href="#slock"/></svg></button>
<button class="tool on" aria-label="Endpoint"><svg><use href="#send"/></svg></button>
<button class="tool on" aria-label="Midpoint"><svg><use href="#smid"/></svg></button>
<button class="tool on" aria-label="Center"><svg><use href="#scen"/></svg></button>
<button class="tool" aria-label="Angle"><svg><use href="#sang"/></svg></button>
<button class="tool" aria-label="Intersection"><svg><use href="#sint"/></svg></button>
<button class="tool" aria-label="Perpendicular"><svg><use href="#sperp"/></svg></button>
<button class="tool" aria-label="Extension"><svg><use href="#sext"/></svg></button>
<button class="tool" aria-label="Parallel"><svg><use href="#spar"/></svg></button>
<button class="tool" aria-label="Special"><svg><use href="#sspec"/></svg></button>
<button class="tool" aria-label="Near"><svg><use href="#snear"/></svg></button>
<button class="tool on" aria-label="Ortho"><svg><use href="#sortho"/></svg></button>
<button class="tool on" aria-label="Grid"><svg><use href="#sgrid"/></svg></button>
<button class="tool" aria-label="Working plane"><svg><use href="#swp"/></svg></button>
<button class="tool on" aria-label="Dimensions"><svg><use href="#sdim"/></svg></button>
<button class="tool" aria-label="Toggle grid"><svg><use href="#sgrid2"/></svg></button>
</div>

<main class="work">
<aside class="dock">
<header class="title"><h2>Combo View</h2><button aria-label="Float"><svg><use href="#float"/></svg></button><button aria-label="Close"><svg><use href="#close"/></svg></button></header>
<div class="tabs top" role="tablist"><button role="tab" class="current">Model</button><button role="tab">Tasks</button></div>
<div class="pane">
<ul class="tree">
<li class="root"><i class="tri down"></i><svg><use href="#doc"/></svg><b>remodel_ifc</b></li>
<li class="dim"><i class="tri"></i><svg><use href="#group"/></svg>dxf</li>
<li><i></i><svg><use href="#poly"/></svg>Line</li>
<li><i></i><svg><use href="#poly"/></svg>Line001</li>
<li class="sel"><i class="tri"></i><svg><use href="#array"/></svg>Array</li>
</ul>
<i class="handle"></i>
<div class="props">
<table>
<colgroup><col class="c1"><col class="c2"><col></colgroup>
<thead><tr><th colspan="2">Property</th><th>Value</th></tr></thead>
<tbody>
<tr><td></td><th>Axis Refer…</th><td></td></tr>
<tr><td></td><th>Base</th><td>Structure</td></tr>
<tr><td></td><th>Count</th><td>6</td></tr>
<tr><td></td><th>Expand Ar…</th><td>false</td></tr>
<tr><td></td><th>Fuse</th><td>false</td></tr>
<tr class="section"><th colspan="3">Orthogonal a..</th></tr>
<tr><td><i class="tri"></i></td><th>Interval X</th><td>[9000.00 mm  0.00 mm  0.…</td></tr>
<tr><td><i class="tri"></i></td><th>Interval Y</th><td>[0.00 mm  9000.00 mm  0.…</td></tr>
<tr><td><i class="tri"></i></td><th>Interval Z</th><td>[0.00 mm  0.00 mm  100.0…</td></tr>
<tr class="picked"><td></td><th>Number X</th><td>3</td></tr>
<tr><td></td><th>Number Y</th><td>2</td></tr>
<tr><td></td><th>Number Z</th><td>1</td></tr>
</tbody>
</table>
<div class="scroll"><button class="up" aria-label="Scroll up"></button><i class="thumb"></i><button class="dn" aria-label="Scroll down"></button></div>
</div>
<div class="tabs bottom" role="tablist"><button role="tab">View</button><button role="tab" class="current">Data</button></div>
</div>
</aside>
<section class="mdi">
<svg class="view3d" viewBox="0 0 1224 562" preserveAspectRatio="xMidYMid slice" role="img" aria-label="3D view">
<defs><linearGradient id="sky" x1="0" y1="0" x2="0" y2="1">
<stop offset="0" stop-color="#303665"/><stop offset=".045" stop-color="#333766"/><stop offset=".055" stop-color="#3b3766"/><stop offset=".13" stop-color="#3f3d6c"/><stop offset=".19" stop-color="#444274"/><stop offset=".21" stop-color="#4b4370"/><stop offset=".24" stop-color="#4b446f"/><stop offset=".25" stop-color="#474a70"/><stop offset=".38" stop-color="#50517f"/><stop offset=".4" stop-color="#58567c"/><stop offset=".51" stop-color="#68628b"/><stop offset=".525" stop-color="#636787"/><stop offset=".64" stop-color="#737395"/><stop offset=".68" stop-color="#7b7893"/><stop offset=".8" stop-color="#84819c"/><stop offset=".86" stop-color="#8c869f"/><stop offset=".94" stop-color="#938da1"/><stop offset=".965" stop-color="#9195aa"/><stop offset="1" stop-color="#9095ac"/></linearGradient>
<linearGradient id="fine" gradientUnits="userSpaceOnUse" x1="0" y1="0" x2="0" y2="562"><stop offset="0" stop-color="#32305a" stop-opacity=".15"/><stop offset=".3" stop-color="#32305a" stop-opacity=".4"/><stop offset="1" stop-color="#32304e" stop-opacity=".42"/></linearGradient>
<linearGradient id="bold" gradientUnits="userSpaceOnUse" x1="0" y1="0" x2="0" y2="562"><stop offset="0" stop-color="#23233c" stop-opacity=".2"/><stop offset=".5" stop-color="#23233c" stop-opacity=".65"/><stop offset="1" stop-color="#23233c" stop-opacity=".7"/></linearGradient></defs>
<rect width="1224" height="562" fill="url(#sky)"/>
<g id="grid" shape-rendering="crispEdges"></g>
<path class="wire" d="M360 372L545 265M354 382L539 488"/>
<use href="#column" x="738" y="54" width="32" height="102"/>
<use href="#column" x="535" y="171" width="32" height="102"/>
<use href="#column" x="941" y="171" width="32" height="102"/>
<use href="#column" x="332" y="288" width="32" height="102"/>
<use href="#column" x="738" y="288" width="32" height="102"/>
<use href="#column" x="535" y="405" width="32" height="102"/>
</svg>
<div class="tabs docs" role="tablist">
<button role="tab"><svg><use href="#fc"/></svg>Start page<svg class="x"><use href="#x"/></svg></button>
<button role="tab" class="current"><svg><use href="#fc"/></svg>remodel_ifc : 1*<svg class="x"><use href="#x"/></svg></button>
</div>
</section>
</main>

<i class="handle wide"></i>
<section class="report">
<h2>Report view</h2>
<pre>16:01:46  Pick end point
16:13:02  ----------------
16:13:02  Orthogonal array
16:13:02  base_object: Structure
16:13:02  v_x: Vector (100.0, 0.0, 0.0)
16:13:02  v_y: Vector (0.0, 100.0, 0.0)</pre>
</section>
<script src="grid.js"></script>
</body>
</html>
```

FILE: grid.js
```js
// Isometric ground grid: one line per metre, a heavier one every ten.
const grid = document.getElementById("grid");
const ORIGIN = { x: 551, y: 261 };
const STEP = 26.04;
const SLOPE = 0.5774;
const HALF = 700;

function addLine(k, dir) {
  const line = document.createElementNS("http://www.w3.org/2000/svg", "line");
  const y = ORIGIN.y + k * STEP;
  line.setAttribute("x1", ORIGIN.x - HALF);
  line.setAttribute("y1", y - dir * SLOPE * HALF);
  line.setAttribute("x2", ORIGIN.x + HALF);
  line.setAttribute("y2", y + dir * SLOPE * HALF);
  let name = k % 10 === 0 ? "major" : "minor";
  if (k === 0) name = dir > 0 ? "axis-y" : "axis-x";
  line.setAttribute("class", name);
  grid.appendChild(line);
}

for (const pass of ["minor", "major", "axis"]) {
  for (let k = -30; k <= 30; k++) {
    const kind = k === 0 ? "axis" : k % 10 === 0 ? "major" : "minor";
    if (kind !== pass) continue;
    addLine(k, 1);
    addLine(k, -1);
  }
}
```

FILE: styles.css
```css
* { box-sizing: border-box; }
body { margin: 0; height: 100vh; display: flex; flex-direction: column; overflow: hidden; background: #eeefed; color: #000; font: 12px/16px "DejaVu Sans", sans-serif; }
button, select { font: inherit; color: inherit; margin: 0; padding: 0; border: 0; background: none; }
h2 { margin: 0; font: inherit; }
i { font-style: normal; }
.defs { position: absolute; width: 0; height: 0; }
.dimtext { font: bold 7px "DejaVu Sans Mono", monospace; fill: #06383c; }

.menubar { display: flex; flex: none; gap: 14px; height: 17px; padding-left: 5px; overflow: hidden; border-bottom: 1px solid #d3d4d2; }
.menubar button { height: 14px; line-height: 14px; white-space: nowrap; }
.menubar u { text-underline-offset: 2px; }

.toolbar { display: flex; flex: none; align-items: center; height: 39px; overflow: hidden; border-bottom: 1px solid #b3b4b2; background: linear-gradient(#f7f8f6, #ecedeb); }
.toolbar > * { flex: none; }
.tool { display: flex; align-items: center; justify-content: center; width: 31px; height: 31px; margin: 0 1px; border-radius: 2px; }
.tool svg { width: 24px; height: 24px; }
.tool.on { border: 1px solid #a9aaa8; background: #d8dad7; }
.drop { display: flex; justify-content: center; width: 12px; height: 30px; align-items: center; }
.drop::before { content: ""; border: 4px solid transparent; border-top-color: #555; border-bottom: 0; }
.drop.off::before { border-top-color: #c4c5c3; }
.sep { width: 7px; height: 20px; background: linear-gradient(#d2d3d1, #d2d3d1) 3px 0 / 1px 100% no-repeat; }
.grip { width: 16px; height: 17px; padding: 0 4px 0 8px; background: conic-gradient(at 1px 1px, transparent 75%, #b0b1af 0) 0 0 / 3px 3px content-box content-box; }
.grip.first { width: 6px; padding: 0 4px 0 1px; }
.workbench { position: relative; width: 172px; height: 24px; margin-left: 1px; }
.workbench svg { position: absolute; left: 6px; top: 4px; width: 16px; height: 16px; pointer-events: none; }
.workbench select { appearance: none; width: 100%; height: 24px; padding-left: 24px; border: 1px solid #a7a8a6; border-radius: 3px; background: linear-gradient(#fafbf9, #eff0ee); }
.workbench::after { content: ""; position: absolute; right: 7px; top: 10px; border: 4px solid transparent; border-top-color: #555; border-bottom: 0; }
.workbench + .grip { width: 15px; padding-right: 3px; }
.textbtn { display: flex; align-items: center; justify-content: center; height: 24px; border: 1px solid #a7a8a6; border-radius: 3px; background: linear-gradient(#fbfcfa, #f0f1ef); white-space: nowrap; }
.textbtn svg { width: 18px; height: 18px; margin-right: 2px; }
.textbtn svg.small { width: 14px; height: 14px; }
.plane { width: 79px; margin: 0 2px 0 1px; padding-right: 4px; }
.style { width: 123px; }
.autogroup { display: flex; align-items: center; justify-content: center; width: 78px; height: 24px; padding-right: 6px; }
.autogroup svg { width: 20px; height: 20px; }

.work { display: flex; flex: 1; min-height: 0; gap: 6px; }
.dock { display: flex; flex: none; flex-direction: column; width: 303px; min-height: 0; }
.title { display: flex; align-items: center; height: 19px; margin-bottom: 2px; }
.title h2 { flex: 1; }
.title button { width: 14px; height: 12px; }
.title svg { display: block; width: 12px; height: 12px; }
.tabs { display: flex; flex: none; }
.tabs button { border: 1px solid #b3b4b2; background: #e2e3e1; white-space: nowrap; }
.tabs .current { background: #f7f8f6; }
.top { height: 24px; align-items: flex-end; }
.top button { width: 56px; height: 23px; border-bottom: 0; border-left: 0; border-radius: 0 3px 0 0; }
.top .current { width: 55px; height: 24px; padding-right: 6px; }
.pane { display: flex; flex: 1; flex-direction: column; min-height: 0; border: 1px solid #b3b4b2; border-left: 0; background: #f7f8f6; }
.tree { flex: 1; min-height: 0; margin: 0 1px 0 0; padding: 0; border: 1px solid #b3b4b2; border-width: 1px 1px 1px 0; background: #fff; list-style: none; }
.tree li { display: flex; align-items: center; height: 18px; padding-left: 20px; }
.tree li.root { padding-left: 0; }
.tree svg { width: 16px; height: 16px; margin-right: 6px; }
.tree i { display: flex; justify-content: center; width: 20px; height: 8px; padding-right: 6px; }
.tree .dim { color: #bcc0c4; }
.tree .sel { width: 133px; background: #278bc9; color: #fff; }
.tri::before { content: ""; width: 0; height: 0; border: 4px solid transparent; border-left: 5px solid #555; border-right: 0; }
.tree .down { padding: 2px 6px 0 0; }
.down::before { border: 4px solid transparent; border-top: 5px solid #555; border-bottom: 0; }
.handle { flex: none; width: 18px; height: 3px; margin: 0 0 0 141px; background: conic-gradient(at 1px 1px, transparent 75%, #b0b1af 0) 0 0 / 3px 3px; }
.handle.wide { margin: 2px auto 2px 911px; }

.props { display: flex; flex: none; margin-right: 2px; border: 1px solid #b3b4b2; border-width: 1px 1px 1px 0; background: #fff; padding-top: 1px; }
.props table { flex: 1; min-width: 0; table-layout: fixed; border-spacing: 0; }
.c1 { width: 19px; }
.c2 { width: 80px; }
.props th, .props td { height: 20px; padding: 0 0 0 3px; border-bottom: 1px solid #c4c5c3; border-right: 1px solid #c4c5c3; font-weight: normal; text-align: left; line-height: 19px; white-space: pre; overflow: hidden; }
.props thead th { height: 21px; padding-left: 1px; border-bottom: 2px solid #b3b4b2; background: linear-gradient(#f9faf8, #e9eae8); }
.props thead th + th { padding-left: 2px; }
.props tbody tr td:first-child { padding: 0; border: 0; }
.props tbody tr:nth-child(even) { background: #f6f7f5; }
.props .tri { display: flex; padding-left: 7px; }
.props tbody tr.section { background: #9fa09e; }
.props .section th { padding-left: 2px; color: #fff; font-weight: bold; }
.picked td:first-child, .picked th { background: #278bc9; color: #fff; }
.scroll { display: flex; flex-direction: column; width: 15px; border: 1px solid #b3b4b2; border-width: 0 1px; background: #f5f6f4; }
.scroll button { display: flex; align-items: center; justify-content: center; height: 14px; }
.up::before { content: ""; border: 4px solid transparent; border-bottom-color: #555; border-top: 0; }
.dn::before { content: ""; border: 4px solid transparent; border-top-color: #555; border-bottom: 0; }
.thumb { height: 117px; margin-bottom: auto; border: 1px solid #c0c1bf; border-width: 1px 0; background: #e2e3e1; }
.scroll .dn { border-top: 1px solid #c0c1bf; }
.bottom { height: 26px; }
.bottom button { width: 50px; height: 23px; padding-right: 4px; border-width: 0 1px 1px 0; border-radius: 0 0 3px 3px; }
.bottom .current { width: 52px; height: 25px; padding-right: 0; }

.mdi { display: flex; flex: 1; flex-direction: column; min-width: 0; }
.view3d { display: block; flex: 1; width: 100%; min-height: 0; }
.minor { stroke: url(#fine); }
.major { stroke: url(#bold); }
.axis-x { stroke: #a00c14; }
.axis-y { stroke: #0c9a0c; }
.wire { stroke: #000; stroke-width: 2; fill: none; }
.docs { height: 31px; border-top: 1px solid #b3b4b2; align-items: flex-start; }
.docs button { display: flex; align-items: center; width: 133px; height: 28px; padding-left: 11px; border-top: 0; border-radius: 0 0 3px 3px; }
.docs svg { width: 16px; height: 16px; margin-right: 4px; }
.docs svg.x { width: 12px; height: 12px; margin: 0 0 0 7px; }
.docs .current { width: 162px; height: 30px; border-left: 0; }

.report { flex: none; height: 104px; overflow: hidden; }
.report h2 { height: 20px; line-height: 20px; border-bottom: 1px solid #b3b4b2; }
.report pre { margin: 0; min-height: 84px; background: #fff; font: 13px/16px "Liberation Mono", monospace; }
```
